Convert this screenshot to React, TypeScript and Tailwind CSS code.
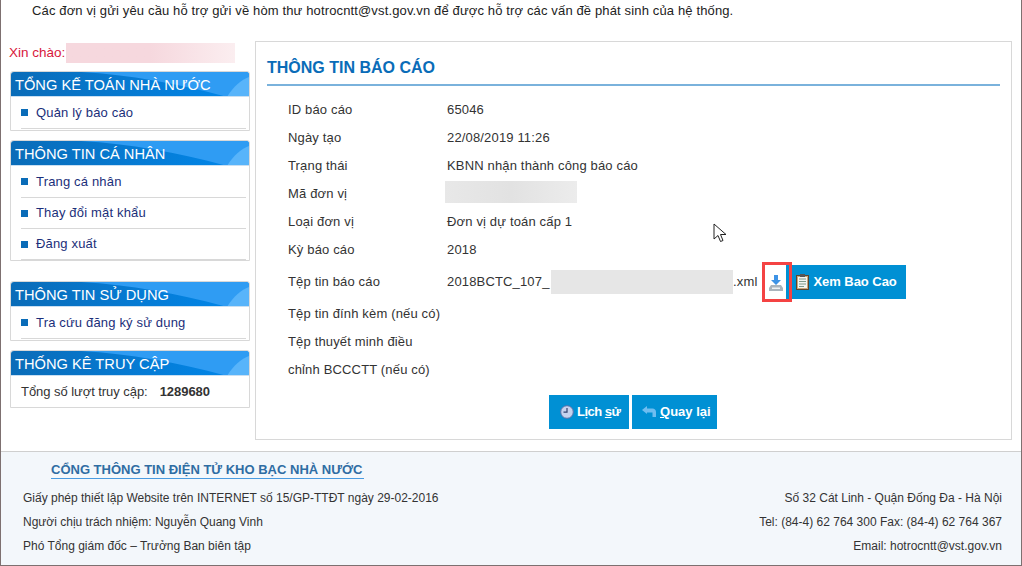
import React from "react";

const font = { fontFamily: '"Liberation Sans", Arial, sans-serif' };

function Head({ title }: { title: string }) {
  return (
    <div className="relative h-[25px] overflow-hidden rounded-t-[3px] border-b border-[#c9dff2] bg-gradient-to-r from-[#0a6cb8] to-[#0088ec]">
      <svg className="absolute inset-0" width="238" height="25" viewBox="0 0 238 25" preserveAspectRatio="none">
        <path d="M70 0 C120 3 170 12 216 25 L238 25 L238 0 Z" fill="#2f9cf3" />
        <path d="M216 25 C222 15 230 8 238 5 L238 25 Z" fill="#58b4fa" />
      </svg>
      <span className="absolute left-[4px] top-[3px] text-[14.67px] leading-[20px] text-white whitespace-nowrap">{title}</span>
    </div>
  );
}

function Item({ label, h }: { label: string; h: number }) {
  return (
    <div style={{ height: h }} className="ml-[10px] mr-[3px] flex items-center border-b border-[#d8d8d8] text-[#1b2f7a]">
      <span className="mr-[8px] block h-[7px] w-[7px] bg-[#0a6cb8]" />
      <span className="text-[13px] tracking-[0.17px]">{label}</span>
    </div>
  );
}

function Box({ title, children, className }: { title: string; children: React.ReactNode; className?: string }) {
  return (
    <div className={`rounded-t-[3px] border border-[#d8d8d8] bg-white ${className ?? ""}`}>
      <Head title={title} />
      {children}
    </div>
  );
}

function Row({ label, children }: { label: string; children?: React.ReactNode }) {
  return (
    <div className="flex h-[28px] items-center">
      <div className="w-[159px] shrink-0 text-[#333]">{label}</div>
      <div className="flex items-center text-[#333]">{children}</div>
    </div>
  );
}

function Btn({ children, w, className }: { children: React.ReactNode; w: number; className?: string }) {
  return (
    <div style={{ width: w }} className={`flex h-[34px] items-center justify-start bg-[#0090d4] text-[13px] font-bold text-white ${className ?? ""}`}>
      {children}
    </div>
  );
}

export default function App() {
  return (
    <div style={font} className="h-[566px] w-[1022px] overflow-hidden border-x border-b border-[#7d7070] bg-white text-[13px] text-[#333]">
      <div className="pl-[31px] pt-[2px] leading-[18px] tracking-[0.14px] text-[#222] whitespace-nowrap">
        Các đơn vị gửi yêu cầu hỗ trợ gửi về hòm thư hotrocntt@vst.gov.vn để được hỗ trợ các vấn đề phát sinh của hệ thống.
      </div>
      <div className="flex h-[431px] pl-[9px] pt-[21px]">
        <div className="w-[240px] shrink-0 pt-[2px]">
          <div className="-ml-[1px] flex h-[20px] items-center text-[#d8183c]">
            <span className="text-[13.5px]">Xin chào:</span>
            <div className="ml-[1px] h-[20px] w-[169px] bg-gradient-to-r from-[#f6d8de] via-[#f6d8de] to-[#fbeef0]" />
          </div>
          <Box title="TỔNG KẾ TOÁN NHÀ NƯỚC" className="mt-[8px] h-[60px]">
            <Item label="Quản lý báo cáo" h={32} />
          </Box>
          <Box title="THÔNG TIN CÁ NHÂN" className="mt-[9px] h-[121px]">
            <Item label="Trang cá nhân" h={32} />
            <Item label="Thay đổi mật khẩu" h={31} />
            <Item label="Đăng xuất" h={31} />
          </Box>
          <Box title="THÔNG TIN SỬ DỤNG" className="mt-[20px] h-[60px]">
            <Item label="Tra cứu đăng ký sử dụng" h={32} />
          </Box>
          <Box title="THỐNG KÊ TRUY CẬP" className="mt-[9px] h-[58px]">
            <div className="flex h-[31px] items-center pl-[10px] tracking-[-0.05px]">
              Tổng số lượt truy cập:<span className="ml-[12px] font-bold">1289680</span>
            </div>
          </Box>
        </div>
        <div className="ml-[5px] h-[399px] w-[757px] border border-[#d8d8d8] px-[11px]">
          <div className="mt-[15px] h-[29px] border-b-2 border-[#7ab2dc] text-[16px] font-bold leading-[22px] text-[#0a6cb8]">
            THÔNG TIN BÁO CÁO
          </div>
          <div className="pl-[21px] pt-[10px] tracking-[0.16px]">
            <Row label="ID báo cáo">65046</Row>
            <Row label="Ngày tạo">22/08/2019 11:26</Row>
            <Row label="Trạng thái">KBNN nhận thành công báo cáo</Row>
            <Row label="Mã đơn vị">
              <div className="-ml-[2px] mb-[4px] h-[22px] w-[132px] bg-gradient-to-r from-[#e8e8e8] via-[#e2e2e2] to-[#ececec]" />
            </Row>
            <Row label="Loại đơn vị">Đơn vị dự toán cấp 1</Row>
            <Row label="Kỳ báo cáo">2018</Row>
            <div className="flex h-[36px] items-center">
              <div className="w-[159px] shrink-0">Tệp tin báo cáo</div>
              <span className="w-[104px] whitespace-nowrap">2018BCTC_107_</span>
              <div className="h-[24px] w-[182px] bg-[#e6e6e6]" />
              <span>.xml</span>
              <div className="ml-[5px] flex h-[40px] w-[30px] items-stretch border-[3px] border-[#f44343] bg-white">
                <div className="flex flex-1 items-center justify-center pt-[1px]">
                  <svg width="14" height="16" viewBox="0 0 14 16">
                    <path d="M5 0h4v5h3L7 10 2 5h3z" fill="#3d93e6" />
                    <path d="M2 10h10l2 3v3H0v-3z" fill="#a9b4bd" />
                    <path d="M3 12.500h8V14H3z" fill="#eef2f4" />
                  </svg>
                </div>
                <div className="w-[3px] bg-[#0090d4]" />
              </div>
              <Btn w={114} className="pl-[4px]">
                <svg className="mr-[4px]" width="13" height="16" viewBox="0 0 13 16">
                  <rect x="0.5" y="1.5" width="12" height="14" fill="#c9a77a" stroke="#5b4630" />
                  <rect x="2" y="3" width="9" height="11" fill="#f3f5f2" />
                  <rect x="4" y="0" width="5" height="3" fill="#555" />
                  <path d="M3 5h7M3 7.500h7M3 10h7M3 12.500h5" stroke="#7f9a8a" />
                </svg>
                <span className="tracking-[-0.05px]">Xem Bao Cao</span>
              </Btn>
            </div>
            <div className="flex h-[28px] items-center">Tệp tin đính kèm (nếu có)</div>
            <div className="flex h-[28px] items-center">Tệp thuyết minh điều</div>
            <div className="flex h-[28px] items-center">chỉnh BCCCTT (nếu có)</div>
          </div>
          <div className="mt-[11px] flex justify-center gap-[3px] pr-[1px] tracking-normal">
            <Btn w={80} className="pl-[11px]">
              <svg className="mr-[3px]" width="14" height="14" viewBox="0 0 14 14">
                <circle cx="7" cy="7" r="6.300" fill="#c6d2ee" stroke="#5a6fa8" />
                <path d="M7 3v4.200H3.500" stroke="#33406e" strokeWidth="1.200" fill="none" />
              </svg>
              <span className="tracking-[-0.5px]">Lịch <span className="underline">s</span>ử</span>
            </Btn>
            <Btn w={85} className="pl-[10px]">
              <svg className="mr-[4px]" width="14" height="12" viewBox="0 0 14 12">
                <path d="M0 4 5 0v2.500h5.500C12.500 2.500 14 4 14 6v5h-3.500V6.500H5V8z" fill="#6fbdf0" />
              </svg>
              <span><span className="underline">Q</span>uay lại</span>
            </Btn>
          </div>
        </div>
      </div>
      <div className="flex h-[115px] justify-between border-t border-[#cfcfcf] bg-[#f3f7fb] pl-[22px] pr-[19px] text-[12px] text-[#333]">
        <div>
          <div className="ml-[28px] mt-[10px] inline-block border-b border-[#4a9be0] pr-[2px] text-[13px] font-bold leading-[16px] text-[#2f6da3] whitespace-nowrap">
            CỔNG THÔNG TIN ĐIỆN TỬ KHO BẠC NHÀ NƯỚC
          </div>
          <div className="mt-[7px] leading-[24px]">Giấy phép thiết lập Website trên INTERNET số 15/GP-TTĐT ngày 29-02-2016</div>
          <div className="leading-[24px]">Người chịu trách nhiệm: Nguyễn Quang Vinh</div>
          <div className="leading-[24px]">Phó Tổng giám đốc – Trưởng Ban biên tập</div>
        </div>
        <div className="pt-[34px] text-right leading-[24px]">
          <div>Số 32 Cát Linh - Quận Đống Đa - Hà Nội</div>
          <div>Tel: (84-4) 62 764 300 Fax: (84-4) 62 764 367</div>
          <div>Email: hotrocntt@vst.gov.vn</div>
        </div>
      </div>
      <svg className="absolute left-[713px] top-[223px]" width="14" height="20" viewBox="0 0 14 20">
        <path d="M1 1v15l4-3.500 2.500 6 2.500-1-2.500-6H13z" fill="#fff" stroke="#222" strokeWidth="1" />
      </svg>
    </div>
  );
}
